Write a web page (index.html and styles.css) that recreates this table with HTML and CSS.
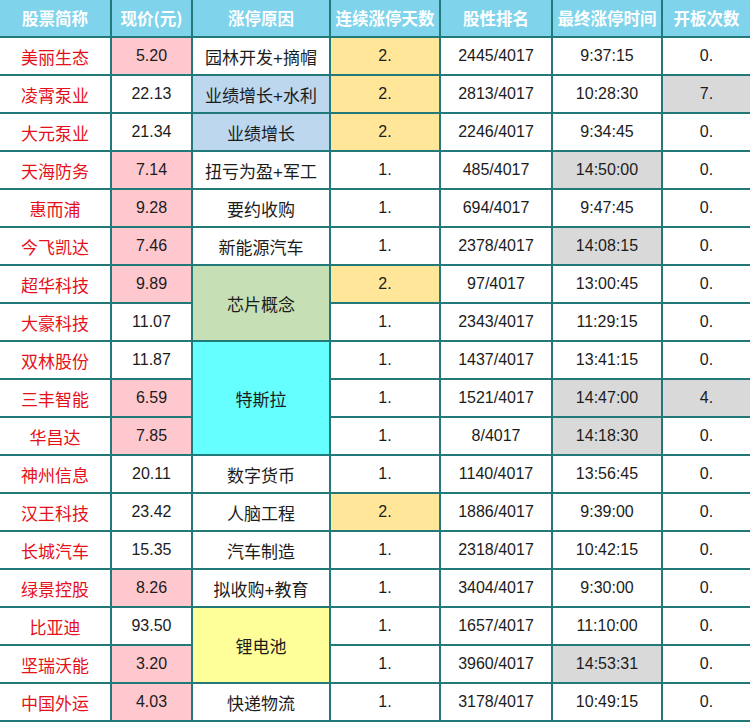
FILE: index.html
```html
<!DOCTYPE html>
<html lang="zh-CN">
<head>
<meta charset="utf-8">
<title>涨停统计</title>
<link rel="stylesheet" href="styles.css">
</head>
<body>
<table class="board">
  <colgroup>
    <col class="c1"><col class="c2"><col class="c3"><col class="c4"><col class="c5"><col class="c6"><col class="c7">
  </colgroup>
  <thead>
    <tr class="head">
      <th>股票简称</th><th>现价(元)</th><th>涨停原因</th><th>连续涨停天数</th><th>股性排名</th><th>最终涨停时间</th><th>开板次数</th>
    </tr>
  </thead>
  <tbody>
    <tr><td class="name">美丽生态</td><td class="num pink">5.20</td><td class="cn">园林开发+摘帽</td><td class="num orange">2.</td><td class="num">2445/4017</td><td class="num">9:37:15</td><td class="num">0.</td></tr>
    <tr><td class="name">凌霄泵业</td><td class="num">22.13</td><td class="cn blue">业绩增长+水利</td><td class="num orange">2.</td><td class="num">2813/4017</td><td class="num">10:28:30</td><td class="num gray">7.</td></tr>
    <tr><td class="name">大元泵业</td><td class="num">21.34</td><td class="cn blue">业绩增长</td><td class="num orange">2.</td><td class="num">2246/4017</td><td class="num">9:34:45</td><td class="num">0.</td></tr>
    <tr><td class="name">天海防务</td><td class="num pink">7.14</td><td class="cn">扭亏为盈+军工</td><td class="num">1.</td><td class="num">485/4017</td><td class="num gray">14:50:00</td><td class="num">0.</td></tr>
    <tr><td class="name">惠而浦</td><td class="num pink">9.28</td><td class="cn">要约收购</td><td class="num">1.</td><td class="num">694/4017</td><td class="num">9:47:45</td><td class="num">0.</td></tr>
    <tr><td class="name">今飞凯达</td><td class="num pink">7.46</td><td class="cn">新能源汽车</td><td class="num">1.</td><td class="num">2378/4017</td><td class="num gray">14:08:15</td><td class="num">0.</td></tr>
    <tr><td class="name">超华科技</td><td class="num pink">9.89</td><td class="cn green" rowspan="2">芯片概念</td><td class="num orange">2.</td><td class="num">97/4017</td><td class="num">13:00:45</td><td class="num">0.</td></tr>
    <tr><td class="name">大豪科技</td><td class="num">11.07</td><td class="num">1.</td><td class="num">2343/4017</td><td class="num">11:29:15</td><td class="num">0.</td></tr>
    <tr><td class="name">双林股份</td><td class="num">11.87</td><td class="cn cyan" rowspan="3">特斯拉</td><td class="num">1.</td><td class="num">1437/4017</td><td class="num">13:41:15</td><td class="num">0.</td></tr>
    <tr><td class="name">三丰智能</td><td class="num pink">6.59</td><td class="num">1.</td><td class="num">1521/4017</td><td class="num gray">14:47:00</td><td class="num gray">4.</td></tr>
    <tr><td class="name">华昌达</td><td class="num pink">7.85</td><td class="num">1.</td><td class="num">8/4017</td><td class="num gray">14:18:30</td><td class="num">0.</td></tr>
    <tr><td class="name">神州信息</td><td class="num">20.11</td><td class="cn">数字货币</td><td class="num">1.</td><td class="num">1140/4017</td><td class="num">13:56:45</td><td class="num">0.</td></tr>
    <tr><td class="name">汉王科技</td><td class="num">23.42</td><td class="cn">人脑工程</td><td class="num orange">2.</td><td class="num">1886/4017</td><td class="num">9:39:00</td><td class="num">0.</td></tr>
    <tr><td class="name">长城汽车</td><td class="num">15.35</td><td class="cn">汽车制造</td><td class="num">1.</td><td class="num">2318/4017</td><td class="num">10:42:15</td><td class="num">0.</td></tr>
    <tr><td class="name">绿景控股</td><td class="num pink">8.26</td><td class="cn">拟收购+教育</td><td class="num">1.</td><td class="num">3404/4017</td><td class="num">9:30:00</td><td class="num">0.</td></tr>
    <tr><td class="name">比亚迪</td><td class="num">93.50</td><td class="cn yellow" rowspan="2">锂电池</td><td class="num">1.</td><td class="num">1657/4017</td><td class="num">11:10:00</td><td class="num">0.</td></tr>
    <tr><td class="name">坚瑞沃能</td><td class="num pink">3.20</td><td class="num">1.</td><td class="num">3960/4017</td><td class="num gray">14:53:31</td><td class="num">0.</td></tr>
    <tr><td class="name">中国外运</td><td class="num pink">4.03</td><td class="cn">快递物流</td><td class="num">1.</td><td class="num">3178/4017</td><td class="num">10:49:15</td><td class="num">0.</td></tr>
  </tbody>
</table>
</body>
</html>
```

FILE: styles.css
```css
html, body {
  margin: 0;
  padding: 0;
  background: #ffffff;
}

.board {
  border-collapse: collapse;
  table-layout: fixed;
  width: 750px;
  font-family: "Liberation Sans", "Noto Sans CJK SC", sans-serif;
  color: #1c1c1c;
}

.c1 { width: 111px; }
.c2 { width: 81px; }
.c3 { width: 138px; }
.c4 { width: 110px; }
.c5 { width: 112px; }
.c6 { width: 110px; }
.c7 { width: 88px; }

.board th,
.board td {
  border: 2px solid #22797a;
  padding: 0;
  text-align: center;
  vertical-align: middle;
  white-space: nowrap;
  overflow: hidden;
}

.board tr > :first-child { border-left: none; }
.board tr > :last-child { border-right: none; }
.board thead th { border-top: none; }

.head { height: 37px; }
.board tbody tr { height: 38px; }

.head th {
  background: #7fd3ea;
  color: #ffffff;
  font-family: "Noto Sans CJK SC", "Liberation Sans", sans-serif;
  font-weight: 700;
  font-size: 16.5px;
  line-height: 20px;
}

.name {
  color: #e5101a;
  font-size: 17px;
}

.cn {
  font-size: 17px;
}

.num {
  font-size: 16px;
}

.pink { background: #ffc7ce; }
.orange { background: #ffe699; }
.blue { background: #bdd7ee; }
.green { background: #c6dfb4; }
.cyan { background: #66ffff; }
.yellow { background: #ffff99; }
.gray { background: #d9d9d9; }
```
